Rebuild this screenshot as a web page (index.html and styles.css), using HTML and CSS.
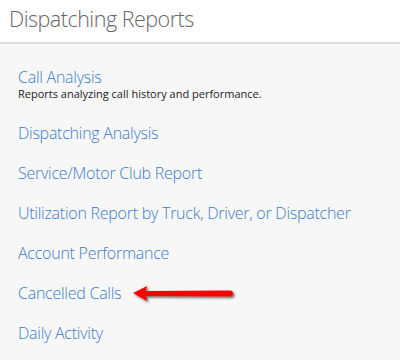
FILE: index.html
```html
<!DOCTYPE html>
<html>
<head>
<meta charset="utf-8">
<link rel="stylesheet" href="styles.css">
</head>
<body>
<div class="header"><h1 class="title">Dispatching Reports</h1></div>
<div class="content">
  <div class="item first">
    <a class="link">Call Analysis</a>
    <div class="desc">Reports analyzing call history and performance.</div>
  </div>
  <div class="item"><a class="link">Dispatching Analysis</a></div>
  <div class="item"><a class="link">Service/Motor Club Report</a></div>
  <div class="item"><a class="link">Utilization Report by Truck, Driver, or Dispatcher</a></div>
  <div class="item"><a class="link">Account Performance</a></div>
  <div class="item arrow-row"><a class="link">Cancelled Calls</a>
    <svg class="arrow" width="110" height="22" viewBox="0 0 110 22">
      <defs><filter id="sh" x="-10%" y="-50%" width="130%" height="200%"><feDropShadow dx="1.5" dy="1.5" stdDeviation="1" flood-color="#000" flood-opacity="0.6"/></filter></defs>
      <g filter="url(#sh)">
        <path d="M2 8 L16 1 L15 6 L99 5.5 Q102 5.5 102 8.5 Q102 11.5 99 11.5 L15 11 L16 16 Z" fill="#f00"/>
      </g>
    </svg>
  </div>
  <div class="item"><a class="link">Daily Activity</a></div>
</div>
</body>
</html>
```
FILE: styles.css
```css
html, body { margin: 0; padding: 0; }
body { background: #f7f7f7; font-family: "Open Sans", "Liberation Sans", sans-serif; width: 400px; height: 360px; overflow: hidden; }
.header { background: #fff; height: 42px; border-bottom: 2px solid #ddd; padding-left: 9px; }
.title { margin: 0; font-weight: 300; font-size: 21.5px; color: #666; line-height: 38px; letter-spacing: -0.5px; }
.content { padding: 21px 0 0 18px; }
.item { height: 40px; display: flex; flex-direction: column; align-items: flex-start; }
.item.first { height: 56px; }
.link { color: #3d7cc9; font-weight: 300; font-size: 16px; line-height: 24px; letter-spacing: -0.25px; cursor: pointer; }
.desc { font-size: 11px; color: #222; line-height: 12px; margin-top: -1px; font-weight: 500; }
.arrow-row { flex-direction: row; position: relative; }
.arrow { position: absolute; left: 113px; top: 4px; }
```
